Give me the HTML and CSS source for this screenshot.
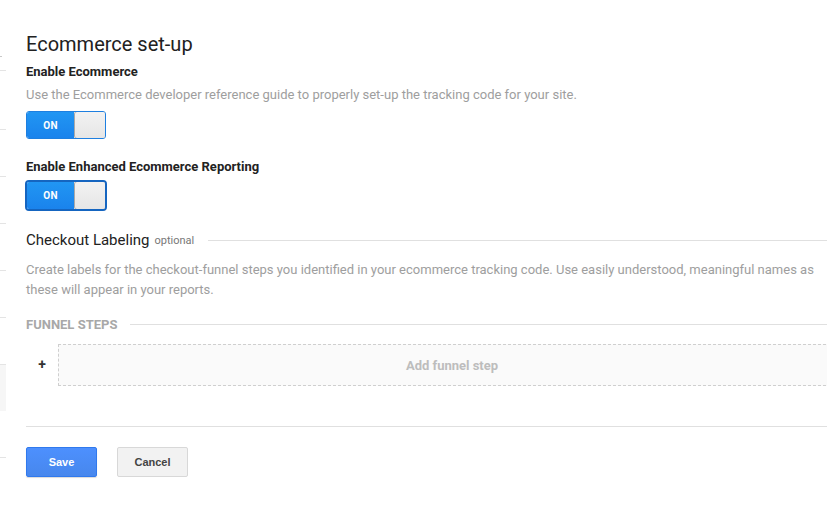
FILE: index.html
```html
<!DOCTYPE html>
<html>
<head>
<meta charset="utf-8">
<link rel="stylesheet" href="styles.css">
</head>
<body>
<div class="page">
  <aside class="rail">
    <div class="tick short" style="height:57px"></div>
    <div class="tick" style="height:14px"></div>
    <div class="tick" style="height:59px"></div>
    <div class="tick" style="height:47px"></div>
    <div class="tick" style="height:47px"></div>
    <div class="tick" style="height:47px"></div>
    <div class="tick" style="height:47px"></div>
    <div class="tick" style="height:47px"></div>
    <div class="rail-box"></div>
    <div class="tick" style="height:47px"></div>
  </aside>
  <main class="main">
    <h1 class="title">Ecommerce set-up</h1>
    <div class="label first">Enable Ecommerce</div>
    <div class="desc">Use the Ecommerce developer reference guide to properly set-up the tracking code for your site.</div>
    <div class="toggle"><span class="on">ON</span><span class="knob"></span></div>

    <div class="label second">Enable Enhanced Ecommerce Reporting</div>
    <div class="toggle focused"><span class="on">ON</span><span class="knob"></span></div>

    <div class="section-head">
      <span class="section-title">Checkout Labeling</span>
      <span class="optional">optional</span>
      <span class="rule"></span>
    </div>
    <p class="section-desc">Create labels for the checkout-funnel steps you identified in your ecommerce tracking code. Use easily understood, meaningful names as these will appear in your reports.</p>

    <div class="funnel-head">
      <span class="funnel-title">FUNNEL STEPS</span>
      <span class="rule"></span>
    </div>
    <div class="funnel-row">
      <span class="plus">+</span>
      <div class="add-step">Add funnel step</div>
    </div>

    <div class="divider"></div>
    <div class="actions">
      <button class="btn save">Save</button>
      <button class="btn cancel">Cancel</button>
    </div>
  </main>
</div>
</body>
</html>
```
FILE: styles.css
```css
html, body {
  margin: 0;
  padding: 0;
  background: #fff;
  overflow: hidden;
}
body {
  font-family: Roboto, "Liberation Sans", Arial, sans-serif;
  width: 827px;
  height: 520px;
}
.page {
  display: flex;
  width: 827px;
  height: 520px;
  overflow: hidden;
}
.rail {
  width: 6px;
  flex: none;
  display: flex;
  flex-direction: column;
}
.tick {
  border-bottom: 1px solid #e4e4e4;
  box-sizing: border-box;
}
.tick.short {
  border-bottom-color: #c8c8c8;
  width: 2px;
}
.rail-box {
  height: 46px;
  background: #f6f6f6;
}
.main {
  padding-left: 20px;
  width: 820px;
  flex: none;
}
.title {
  margin: 32px 0 0;
  font-size: 20px;
  font-weight: 400;
  line-height: 24px;
  color: #212121;
}
.label {
  font-size: 13px;
  font-weight: 700;
  line-height: 16px;
  color: #222;
}
.label.first { margin-top: 8px; }
.label.second { margin-top: 20px; }
.desc {
  margin-top: 6px;
  font-size: 13px;
  line-height: 18px;
  color: #9e9e9e;
}
.toggle {
  margin-top: 7px;
  display: flex;
  width: 80px;
  height: 28px;
  border-radius: 3px;
  box-sizing: border-box;
  overflow: hidden;
  border: 1px solid #1e7fe0;
}
.toggle.focused {
  margin-top: 5px;
  margin-left: -1px;
  width: 82px;
  height: 31px;
  border: 2px solid #1565c0;
  border-radius: 4px;
}
.on {
  width: 47px;
  flex: none;
  background: linear-gradient(#2196f3, #1a83ec);
  color: #fff;
  font-size: 10px;
  font-weight: 700;
  display: flex;
  align-items: center;
  justify-content: center;
  letter-spacing: 0.3px;
}
.knob {
  flex: 1;
  background: linear-gradient(#f2f2f2, #e6e6e6);
  border: 1px solid #a9a9a9;
  border-radius: 3px;
  margin: -1px -1px -1px 0;
}
.section-head {
  margin-top: 19px;
  display: flex;
  align-items: center;
  height: 20px;
}
.section-title {
  font-size: 15px;
  color: #222;
  line-height: 20px;
}
.optional {
  font-size: 11px;
  color: #777;
  margin-left: 5px;
  margin-top: 1px;
}
.rule {
  flex: 1;
  height: 1px;
  background: #e0e0e0;
  margin-left: 14px;
}
.section-desc {
  margin: 10px 0 0;
  font-size: 13px;
  line-height: 20px;
  color: #9e9e9e;
  width: 800px;
}
.funnel-head {
  margin-top: 16px;
  display: flex;
  align-items: center;
  height: 16px;
}
.funnel-title {
  font-size: 13px;
  font-weight: 700;
  color: #a8a8a8;
}
.funnel-head .rule { margin-left: 13px; }
.funnel-row {
  margin-top: 12px;
  display: flex;
  align-items: center;
  width: 820px;
}
.plus {
  width: 32px;
  text-align: center;
  font-size: 14px;
  font-weight: 700;
  color: #333;
  margin-top: -2px;
}
.add-step {
  flex: none;
  width: 786px;
  height: 40px;
  border: 1px dashed #cfcfcf;
  background: #fafafa;
  display: flex;
  align-items: center;
  justify-content: center;
  font-size: 13px;
  font-weight: 700;
  color: #bdbdbd;
}
.divider {
  margin-top: 40px;
  height: 1px;
  background: #e0e0e0;
}
.actions {
  margin-top: 20px;
  display: flex;
  gap: 20px;
}
.btn {
  width: 71px;
  height: 30px;
  border-radius: 2px;
  font-family: "Liberation Sans", Arial, sans-serif;
  font-size: 11px;
  font-weight: 700;
  padding: 0;
  box-sizing: border-box;
}
.save {
  background: linear-gradient(#4d90fe, #4787ed);
  border: 1px solid #3079ed;
  color: #fff;
  box-shadow: 0 1px 1px rgba(0,0,0,0.15);
}
.cancel {
  background: #f2f2f2;
  border: 1px solid #d8d8d8;
  color: #444;
}
```
